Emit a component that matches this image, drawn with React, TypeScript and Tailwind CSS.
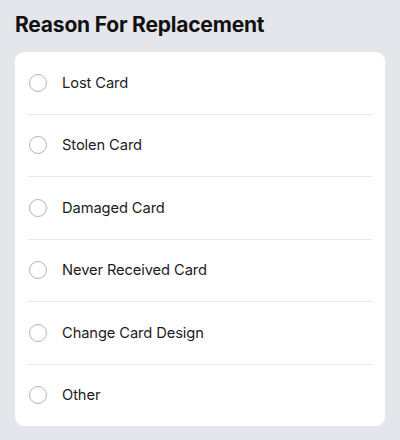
const reasons = [
  "Lost Card",
  "Stolen Card",
  "Damaged Card",
  "Never Received Card",
  "Change Card Design",
  "Other",
];

export default function App() {
  return (
    <div
      className="w-[400px] h-[440px] bg-[#e5e6eb] px-[15px] pt-[12px]"
      style={{ fontFamily: "Inter, 'Liberation Sans', sans-serif" }}
    >
      <h1 className="text-[21px] leading-[26px] font-bold text-[#111111] tracking-[-0.2px]">
        Reason For Replacement
      </h1>

      <div className="mt-[14px] bg-white rounded-[9px] px-[13px]">
        {reasons.map((reason, i) => (
          <div
            key={reason}
            className={`flex items-center h-[61.5px] ${
              i < reasons.length - 1 ? "border-b border-[#e7e7ea] box-content" : ""
            }`}
          >
            <span className="w-[18px] h-[18px] rounded-full border-[1.5px] border-[#b4b4b9] ml-px shrink-0" />
            <span className="ml-[15px] text-[14.7px] tracking-[-0.1px] text-[#1c1c1e]">{reason}</span>
          </div>
        ))}
      </div>
    </div>
  );
}
